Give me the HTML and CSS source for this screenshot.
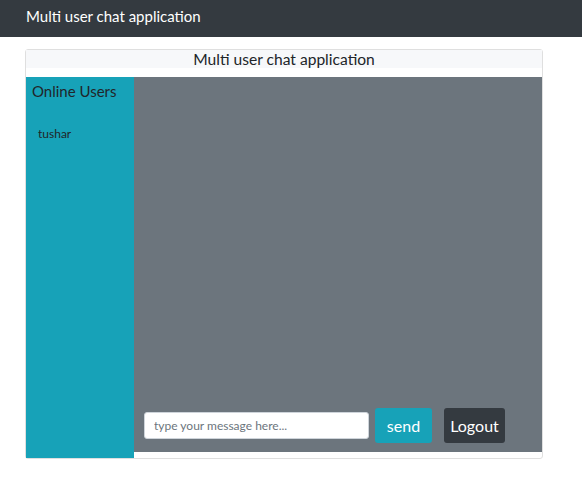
FILE: index.html
```html
<!DOCTYPE html>
<html>
<head>
<meta charset="utf-8">
<link rel="stylesheet" href="styles.css">
</head>
<body>
<nav class="navbar">Multi user chat application</nav>
<div class="card">
  <div class="card-header">Multi user chat application</div>
  <div class="chat-row">
    <aside class="users">
      <div class="users-title">Online Users</div>
      <ul class="user-list"><li>tushar</li></ul>
    </aside>
    <main class="chat">
      <div class="messages"></div>
      <form class="composer">
        <input class="msg-input" type="text" placeholder="type your message here...">
        <button type="button" class="btn btn-send">send</button>
        <button type="button" class="btn btn-logout">Logout</button>
      </form>
    </main>
  </div>
</div>
</body>
</html>
```
FILE: styles.css
```css
* { box-sizing: border-box; }
body {
  margin: 0;
  font-family: Lato, "Open Sans", sans-serif;
  color: #212529;
  background: #fff;
}
.navbar {
  height: 37px;
  background: #343a40;
  color: #fff;
  font-size: 15px;
  line-height: 33px;
  padding-left: 26px;
}
.card {
  margin: 12px 0 0 25px;
  width: 518px;
  border: 1px solid #dfdfdf;
  border-radius: 3px;
}
.card-header {
  height: 18px;
  background: #f7f8fa;
  text-align: center;
  font-size: 15.6px;
  line-height: 18px;
  margin-bottom: 9px;
}
.chat-row {
  display: flex;
  height: 381px;
}
.users {
  width: 108px;
  background: #17a2b8;
  padding: 4px 0 0 6px;
}
.users-title {
  font-size: 15px;
  line-height: 20px;
}
.user-list {
  list-style: none;
  margin: 25px 0 0 6px;
  padding: 0;
  font-size: 12px;
}
.chat {
  flex: 1;
  height: 375px;
  background: #6c757d;
  display: flex;
  flex-direction: column;
}
.messages { flex: 1; }
.composer {
  display: flex;
  align-items: center;
  padding: 0 0 9px 10px;
  margin: 0;
}
.msg-input {
  width: 225px;
  height: 27px;
  border: 1px solid #ced4da;
  border-radius: 3px;
  padding: 0 9px;
  font-family: inherit;
  font-size: 12px;
  color: #495057;
  margin-right: 6px;
}
.msg-input::placeholder { color: #6c757d; }
.btn {
  height: 35px;
  border: none;
  border-radius: 3px;
  color: #fff;
  font-family: inherit;
  font-size: 16px;
  padding: 0;
}
.btn-send {
  width: 57px;
  background: #17a2b8;
  margin-right: 12px;
}
.btn-logout {
  width: 61px;
  background: #343a40;
}
```
